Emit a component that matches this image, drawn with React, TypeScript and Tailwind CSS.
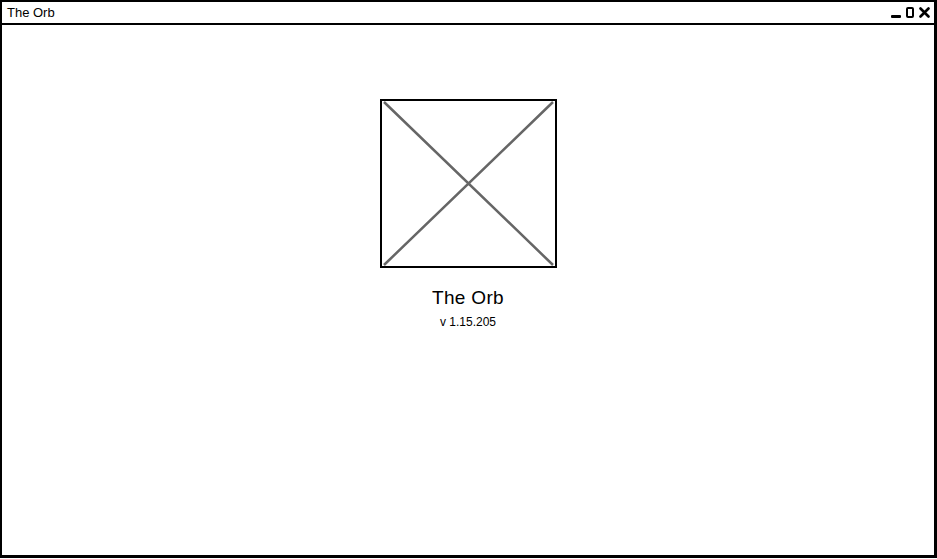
import React from "react";

function WindowControls() {
  return (
    <div className="flex items-center gap-[5px] pr-[4px]">
      <div className="w-[10px] h-[3px] bg-black mt-[8px] rounded-[1px]" />
      <div className="w-[8px] h-[11px] border-[2px] border-black rounded-[2px]" />
      <svg width="11" height="11" viewBox="0 0 11 11">
        <path d="M1.5 1.5 L9.5 9.5 M9.5 1.5 L1.5 9.5" stroke="#000" strokeWidth="2.6" strokeLinecap="round" />
      </svg>
    </div>
  );
}

function ImagePlaceholder() {
  return (
    <div className="relative w-[177px] h-[169px] border-[2px] border-black">
      <svg className="absolute inset-0" width="100%" height="100%" viewBox="0 0 173 165" preserveAspectRatio="none">
        <path d="M2 1 L171 164 M171 1 L2 164" stroke="#666" strokeWidth="2.5" />
      </svg>
    </div>
  );
}

export default function App() {
  return (
    <div className="w-[937px] h-[559px] bg-white font-['Liberation_Sans',sans-serif]">
      <div className="w-full h-[558px] flex flex-col border-t-[2px] border-l-[2px] border-r-[3px] border-b-[3px] border-black">
        <div className="h-[23px] flex items-center justify-between border-b-[2px] border-black shrink-0">
          <span className="pl-[5px] text-[13px] text-black leading-none">The Orb</span>
          <WindowControls />
        </div>
        <div className="flex-1 flex flex-col items-center pt-[74px]">
          <ImagePlaceholder />
          <div className="mt-[20px] text-[19px] leading-none text-black tracking-[0.3px]">The Orb</div>
          <div className="mt-[9px] text-[12px] leading-none text-black">v 1.15.205</div>
        </div>
      </div>
    </div>
  );
}
